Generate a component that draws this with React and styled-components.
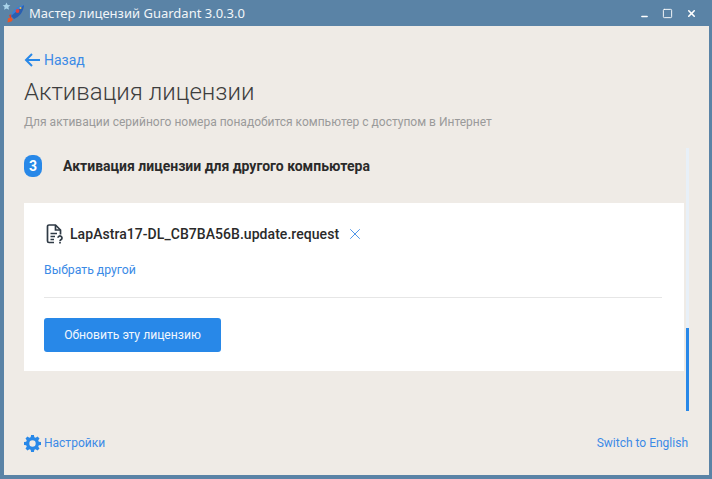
import React from "react";
import styled, { createGlobalStyle } from "styled-components";
import { X, Minus, Square } from "lucide-react";

const GlobalStyle = createGlobalStyle`
  html, body {
    margin: 0;
    padding: 0;
    background: #5a83a6;
  }
  * {
    box-sizing: border-box;
  }
`;

const Frame = styled.div`
  width: 712px;
  height: 479px;
  display: flex;
  flex-direction: column;
  padding: 0 3px 4px 4px;
  background: #5a83a6;
  overflow: hidden;
`;

const TitleBar = styled.div`
  height: 26px;
  flex: none;
  display: flex;
  align-items: center;
  margin-left: -4px;
  color: #f1f5f8;
  font: 13px "Noto Sans", sans-serif;
`;

const AppIcon = styled.svg`
  width: 26px;
  height: 26px;
  flex: none;
`;

const TitleText = styled.span`
  margin-left: 3px;
  flex: 1;
`;

const WinButtons = styled.div`
  display: flex;
  align-items: center;
  gap: 13px;
  margin-right: 12px;
`;

const Body = styled.div`
  flex: 1;
  min-height: 0;
  display: flex;
  flex-direction: column;
  padding: 26px 20px 0 20px;
  background: #efebe6;
  font-family: Roboto, sans-serif;
`;

const LinkRow = styled.a`
  display: flex;
  align-items: center;
  gap: 3px;
  color: #3b8ae6;
  font-size: ${(p) => p.$size || 14}px;
  line-height: 16px;
`;

const BackArrow = styled.svg`
  width: 17px;
  height: 14px;
  flex: none;
`;

const Heading = styled.h1`
  margin: 9px 0 0;
  font-size: 24px;
  line-height: 30px;
  font-weight: 300;
  color: #3d3d3d;
`;

const Subtitle = styled.p`
  margin: 7px 0 0;
  font-size: 12px;
  line-height: 16px;
  color: #9a9a9a;
`;

const Scroller = styled.div`
  height: 263px;
  margin-top: 18px;
  flex: none;
  display: flex;
`;

const ScrollContent = styled.div`
  width: 660px;
  flex: none;
`;

const Track = styled.div`
  width: 3px;
  margin-left: 2px;
  flex: none;
  display: flex;
  flex-direction: column;
  justify-content: flex-end;
  background: #e8f0f8;
`;

const Thumb = styled.div`
  height: 83px;
  background: #2888e8;
`;

const StepRow = styled.div`
  display: flex;
  align-items: center;
  height: 22px;
  margin-top: 7px;
`;

const StepBadge = styled.div`
  width: 18px;
  height: 22px;
  flex: none;
  border-radius: 8px;
  background: #2888e8;
  color: #fff;
  font-size: 14px;
  font-weight: 700;
  display: flex;
  align-items: center;
  justify-content: center;
`;

const StepTitle = styled.div`
  margin-left: 21px;
  font-size: 14px;
  font-weight: 700;
  color: #2a2a2a;
`;

const Card = styled.div`
  margin-top: 26px;
  height: 168px;
  background: #fff;
  padding: 20px 20px 0;
`;

const FileRow = styled.div`
  display: flex;
  align-items: center;
  height: 22px;
`;

const FileIcon = styled.svg`
  width: 18px;
  height: 20px;
  margin-left: 2px;
  flex: none;
`;

const FileName = styled.span`
  margin-left: 6px;
  font-size: 14px;
  font-weight: 500;
  letter-spacing: 0.05px;
  color: #2a2a2a;
`;

const RemoveIcon = styled(X)`
  margin-left: 7px;
`;

const OtherLink = styled.a`
  display: block;
  margin-top: 17px;
  color: #3b8ae6;
  font-size: 12.25px;
  line-height: 16px;
`;

const Divider = styled.hr`
  margin: 19px 0 20px;
  width: 618px;
  height: 1px;
  border: none;
  background: #e6e6e6;
`;

const PrimaryButton = styled.button`
  width: 177px;
  height: 34px;
  border: none;
  border-radius: 3px;
  background: #2888e8;
  color: #f2f7fd;
  font: 12.15px Roboto, sans-serif;
`;

const Footer = styled.div`
  margin-top: 22px;
  display: flex;
  align-items: center;
  justify-content: space-between;
  height: 20px;
  padding-right: 1px;
`;

const GearIcon = styled.svg`
  width: 17px;
  height: 17px;
  flex: none;
`;

export default function App() {
  return (
    <Frame>
      <GlobalStyle />
      <TitleBar>
        <AppIcon viewBox="0 0 26 26">
          <path d="M6.500 2.500l1.200 2.500 2.700.3-2 1.800.6 2.700-2.500-1.400-2.400 1.400.5-2.700-2-1.800 2.700-.3z" fill="#a9d3ea" />
          <path d="M11 17l-3 1.500-.5 4 4-1 1.500-2z" fill="#e8562a" />
          <path d="M9 15l4-1-2.500 4.500z" fill="#d9402e" />
          <path d="M11 16c1-5 6-10 13-11-.5 7-5 12-10 14z" fill="#3a7fd8" />
          <path d="M11 16l3 3c5-2 9.500-7 10-14z" fill="#2b5fae" />
          <circle cx="17.500" cy="11" r="1.900" fill="#e2403c" />
          <circle cx="20.500" cy="8" r="1" fill="#f3c14a" />
        </AppIcon>
        <TitleText>Мастер лицензий Guardant 3.0.3.0</TitleText>
        <WinButtons>
          <Minus size={9} color="#fff" strokeWidth={4} style={{ transform: "translateY(3px)" }} />
          <Square size={11} color="#fff" strokeWidth={2} />
          <X size={11} color="#fff" strokeWidth={3.500} />
        </WinButtons>
      </TitleBar>
      <Body>
        <LinkRow>
          <BackArrow viewBox="0 0 17 14" fill="none" stroke="#2888e8" strokeWidth="2">
            <path d="M16 7H2M8 1L2 7l6 6" />
          </BackArrow>
          Назад
        </LinkRow>
        <Heading>Активация лицензии</Heading>
        <Subtitle>Для активации серийного номера понадобится компьютер с доступом в Интернет</Subtitle>
        <Scroller>
          <ScrollContent>
            <StepRow>
              <StepBadge>3</StepBadge>
              <StepTitle>Активация лицензии для другого компьютера</StepTitle>
            </StepRow>
            <Card>
              <FileRow>
                <FileIcon viewBox="0 0 18 20" fill="none" stroke="#2f3a45" strokeWidth="1.700">
                  <path d="M8 18.500H3A1.500 1.500 0 0 1 1.500 17V2.500A1.500 1.500 0 0 1 3 1h6.500l5 5v4.500" />
                  <path d="M9.500 1v5h5M4.500 9.500H11M4.500 12.500H9M4.500 15.500H8" />
                  <path d="M12 13.800a2 2 0 1 1 3.200 1.700c-.8.500-1.200.9-1.200 1.700M14 18v1.500" />
                </FileIcon>
                <FileName>LapAstra17-DL_CB7BA56B.update.request</FileName>
                <RemoveIcon size={18} strokeWidth={1.200} color="#3b8ae6" />
              </FileRow>
              <OtherLink>Выбрать другой</OtherLink>
              <Divider />
              <PrimaryButton>Обновить эту лицензию</PrimaryButton>
            </Card>
          </ScrollContent>
          <Track>
            <Thumb />
          </Track>
        </Scroller>
        <Footer>
          <LinkRow $size={12}>
            <GearIcon viewBox="0 0 24 24">
              <path
                fill="#2888e8"
                fillRule="evenodd"
                d="M10 0h4l.6 3.100 1.900.8L19.100 2.100 21.900 4.900 20.100 7.500l.8 1.900L24 10v4l-3.100.6-.8 1.900 1.800 2.600-2.800 2.800-2.600-1.800-1.900.8L14 24h-4l-.6-3.100-1.900-.8-2.600 1.800-2.800-2.800 1.800-2.600-.8-1.900L0 14v-4l3.100-.6.800-1.900L2.100 4.900 4.900 2.100 7.500 3.900l1.900-.8zM12 7.500a4.500 4.500 0 1 0 0 9 4.500 4.500 0 0 0 0-9z"
              />
            </GearIcon>
            Настройки
          </LinkRow>
          <LinkRow $size={12}>Switch to English</LinkRow>
        </Footer>
      </Body>
    </Frame>
  );
}
